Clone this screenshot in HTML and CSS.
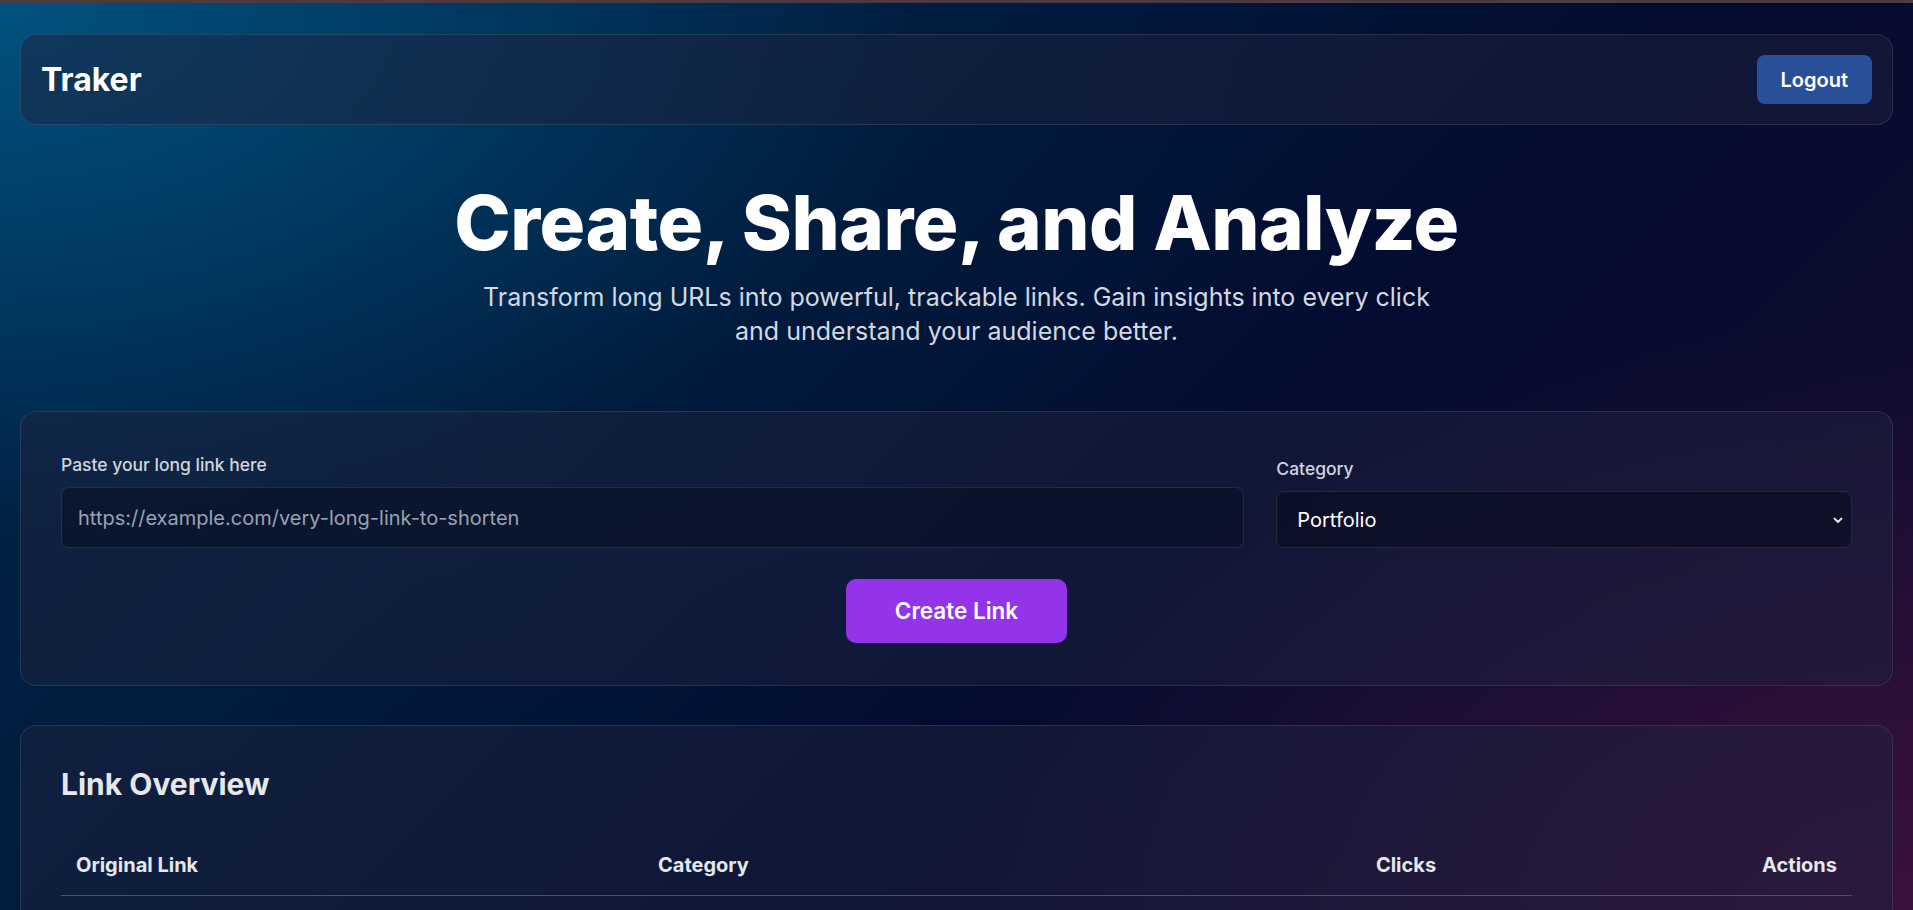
FILE: index.html
```html
<!DOCTYPE html>
<html lang="en">
<head>
<meta charset="utf-8">
<title>Traker</title>
<link rel="stylesheet" href="styles.css">
</head>
<body>
<div class="topbar"></div>
<main class="page">
  <header class="navbar">
    <div class="brand">Traker</div>
    <button class="btn-logout">Logout</button>
  </header>

  <section class="hero">
    <h1 class="hero-title">Create, Share, and Analyze</h1>
    <p class="hero-sub">Transform long URLs into powerful, trackable links. Gain insights into every click and understand your audience better.</p>
  </section>

  <section class="card form-card">
    <div class="form-grid">
      <div class="field field-wide">
        <label class="field-label" for="url">Paste your long link here</label>
        <input id="url" class="text-input" type="text" placeholder="https://example.com/very-long-link-to-shorten">
      </div>
      <div class="field">
        <label class="field-label" for="cat">Category</label>
        <div class="select-wrap">
          <select id="cat" class="select-input">
            <option>Portfolio</option>
            <option>Social</option>
            <option>Marketing</option>
          </select>
          <svg class="chev" width="12" height="12" viewBox="0 0 12 12"><path d="M2.5 4.5 L6 8 L9.5 4.5" fill="none" stroke="#e5e7eb" stroke-width="1.8" stroke-linecap="round" stroke-linejoin="round"/></svg>
        </div>
      </div>
    </div>
    <div class="form-actions">
      <button class="btn-create">Create Link</button>
    </div>
  </section>

  <section class="card table-card">
    <h2 class="table-title">Link Overview</h2>
    <table class="links-table">
      <colgroup>
        <col class="c-orig"><col class="c-cat"><col class="c-clicks"><col class="c-act">
      </colgroup>
      <thead>
        <tr>
          <th class="th-left">Original Link</th>
          <th class="th-left">Category</th>
          <th class="th-center">Clicks</th>
          <th class="th-right">Actions</th>
        </tr>
      </thead>
      <tbody>
        <tr><td class="td-empty" colspan="4"></td></tr>
      </tbody>
    </table>
  </section>
</main>
</body>
</html>
```

FILE: styles.css
```css
* { box-sizing: border-box; }

html, body {
  margin: 0;
  padding: 0;
}

body {
  font-family: Inter, "Noto Sans", "Liberation Sans", sans-serif;
  color: #ffffff;
  min-height: 100vh;
  background-color: #050b2e;
  background-image:
    radial-gradient(ellipse 50% 65% at 100% 100%, rgba(64, 18, 62, 0.85), rgba(64, 18, 62, 0) 100%),
    radial-gradient(ellipse 70% 85% at 0% 0%, #00527f 0%, rgba(0, 60, 100, 0.75) 40%, rgba(0, 30, 64, 0.4) 70%, rgba(0, 20, 50, 0) 100%),
    linear-gradient(135deg, #002a50 0%, #001a3c 35%, #030c30 60%, #0c0b2f 80%, #180c30 100%);
  background-attachment: fixed;
}

.topbar {
  height: 3px;
  background: #4b3a42;
}

.page {
  padding: 31px 20px 40px;
}

/* Navbar */
.navbar {
  display: flex;
  align-items: center;
  justify-content: space-between;
  padding: 20px 20px;
  border: 1px solid rgba(255, 255, 255, 0.1);
  border-radius: 16px;
  background: rgba(30, 34, 62, 0.5);
}

.brand {
  font-size: 32px;
  font-weight: 700;
  line-height: 36px;
}

.btn-logout {
  font-family: inherit;
  font-size: 20px;
  font-weight: 600;
  line-height: 28px;
  color: #ffffff;
  background: #2a4f99;
  border: none;
  border-radius: 8px;
  padding: 10px 24px;
  height: 49px;
}

/* Hero */
.hero {
  text-align: center;
  padding: 59px 0 0;
}

.hero-title {
  margin: 0;
  font-size: 76px;
  font-weight: 800;
  line-height: 76px;
  letter-spacing: -0.5px;
}

.hero-sub {
  margin: 20px auto 0;
  max-width: 985px;
  font-size: 25px;
  line-height: 34px;
  color: #d3d8e0;
}

/* Cards */
.card {
  border: 1px solid rgba(255, 255, 255, 0.1);
  border-radius: 16px;
  background: rgba(30, 34, 62, 0.5);
  padding: 40px;
}

.form-card {
  margin-top: 63px;
  padding-bottom: 42px;
}

.form-grid {
  display: grid;
  grid-template-columns: repeat(3, 1fr);
  gap: 32px;
  align-items: end;
}

.field-wide {
  grid-column: span 2;
}

.field-label {
  display: block;
  font-size: 17.5px;
  font-weight: 500;
  line-height: 26px;
  color: #d1d5db;
  margin-bottom: 9px;
}

.text-input {
  display: block;
  width: 100%;
  height: 61px;
  padding: 0 16px;
  font-family: inherit;
  font-size: 20px;
  color: #ffffff;
  background: rgba(8, 14, 34, 0.55);
  border: 1px solid rgba(255, 255, 255, 0.1);
  border-radius: 8px;
  outline: none;
}

.text-input::placeholder {
  color: #9aa3b2;
}

.select-wrap {
  position: relative;
}

.select-input {
  display: block;
  width: 100%;
  height: 57px;
  padding: 0 40px 0 20px;
  font-family: inherit;
  font-size: 20px;
  color: #ffffff;
  background: rgba(8, 12, 32, 0.65);
  border: 1px solid rgba(255, 255, 255, 0.1);
  border-radius: 8px;
  appearance: none;
  -webkit-appearance: none;
  outline: none;
}

.chev {
  position: absolute;
  right: 8px;
  top: 23px;
  pointer-events: none;
}

.form-actions {
  display: flex;
  justify-content: center;
  margin-top: 31px;
}

.btn-create {
  font-family: inherit;
  font-size: 22.5px;
  font-weight: 600;
  line-height: 32px;
  color: #ffffff;
  background: #9333ea;
  border: none;
  border-radius: 10px;
  padding: 16px 49px;
}

/* Table card */
.table-card {
  margin-top: 39px;
  min-height: 400px;
}

.table-title {
  margin: 0 0 34px;
  font-size: 30px;
  font-weight: 700;
  line-height: 36px;
  color: #e5e7eb;
}

.links-table {
  width: 100%;
  border-collapse: collapse;
  table-layout: fixed;
}

.c-orig { width: 582px; }
.c-cat { width: 640px; }
.c-clicks { width: 246px; }

.links-table th {
  font-size: 20px;
  font-weight: 700;
  line-height: 28px;
  color: #e5e7eb;
  padding: 15px 15px 16px;
  border-bottom: 1px solid #4a5068;
}

.th-left { text-align: left; }
.th-center { text-align: center; }
.th-right { text-align: right; }

.td-empty {
  height: 60px;
}
```
